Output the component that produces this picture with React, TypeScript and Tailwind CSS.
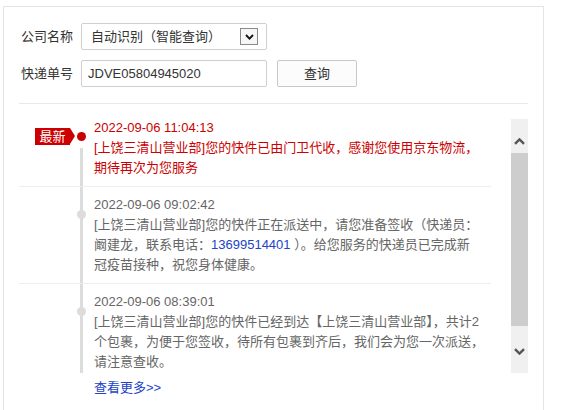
const ChevronDown = ({ className }: { className?: string }) => (
  <svg className={className} width="11" height="7" viewBox="0 0 11 7">
    <path d="M1 1.2 L5.5 5.6 L10 1.2" fill="none" stroke="#555" strokeWidth="2.4" />
  </svg>
);

const ChevronUp = ({ className }: { className?: string }) => (
  <svg className={className} width="11" height="7" viewBox="0 0 11 7">
    <path d="M1 5.8 L5.5 1.4 L10 5.8" fill="none" stroke="#555" strokeWidth="2.4" />
  </svg>
);

const App = () => {
  return (
    <div className="w-[567px] h-[410px] bg-white overflow-hidden font-['Liberation_Sans','Noto_Sans_CJK_SC',sans-serif] text-[13px] leading-[20px] text-[#333]">
      <div className="ml-[3px] mt-[6px] w-[541px] h-[420px] border border-[#e4e4e4] px-[15px]">
        {/* query form */}
        <div className="pt-[16px] pb-[16px] border-b border-[#e8e8e8] flex flex-col gap-[10px]">
          <div className="flex items-center">
            <span className="w-[62px] pl-[2px]">公司名称</span>
            <div className="w-[186px] h-[27px] border border-[#cfcfcf] rounded-[2px] flex items-center justify-between pl-[9px] pr-[8px]">
              <span>自动识别（智能查询）</span>
              <span className="w-[18px] h-[17px] border border-[#8a8a8a] bg-[#f6f6f6] flex items-center justify-center">
                <svg width="9" height="6" viewBox="0 0 9 6">
                  <path d="M1 1 L4.5 4.6 L8 1" fill="none" stroke="#111" strokeWidth="1.8" />
                </svg>
              </span>
            </div>
          </div>
          <div className="flex items-center">
            <span className="w-[62px] pl-[2px]">快递单号</span>
            <div className="w-[186px] h-[27px] border border-[#cfcfcf] rounded-[2px] flex items-center pl-[6px]">
              JDVE05804945020
            </div>
            <button className="ml-[10px] w-[80px] h-[27px] border border-[#c8c8c8] rounded-[2px] bg-[#fcfcfc] text-[#333]">
              查询
            </button>
          </div>
        </div>

        {/* timeline */}
        <div className="flex">
          <div className="relative flex-1 pt-[14px] pr-[20px] text-[#666]">
            <div className="absolute left-[61px] top-[44px] w-[3px] h-[225px] bg-[#dcdcdc]" />

            <div className="relative pl-[75px] pb-[8px] border-b border-[#eee] text-[#cc0000]">
              <div className="absolute left-[16px] top-[10px] flex">
                <span className="w-[35px] h-[17px] bg-[#cc0000] text-white text-[13px] leading-[17px] text-center">最新</span>
                <span className="w-0 h-0 border-y-[8.5px] border-y-transparent border-l-[5px] border-l-[#cc0000]" />
              </div>
              <div className="absolute left-[58px] top-[14px] w-[9px] h-[9px] rounded-full bg-[#cc0000]" />
              <div>2022-09-06 11:04:13</div>
              <div className="whitespace-nowrap">
                [上饶三清山营业部]您的快件已由门卫代收，感谢您使用京东物流，
                <br />
                期待再次为您服务
              </div>
            </div>

            <div className="relative pl-[75px] pt-[8px] pb-[8px] border-b border-[#eee]">
              <div className="absolute left-[58px] top-[23px] w-[9px] h-[9px] rounded-full bg-[#dcdcdc]" />
              <div>2022-09-06 09:02:42</div>
              <div className="whitespace-nowrap">
                [上饶三清山营业部]您的快件正在派送中，请您准备签收（快递员：
                <br />
                阚建龙，联系电话：<span className="text-[#2343c7]">13699514401</span> ）。给您服务的快递员已完成新
                <br />
                冠疫苗接种，祝您身体健康。
              </div>
            </div>

            <div className="relative pl-[75px] pt-[8px]">
              <div className="absolute left-[58px] top-[23px] w-[9px] h-[9px] rounded-full bg-[#dcdcdc]" />
              <div>2022-09-06 08:39:01</div>
              <div className="whitespace-nowrap">
                [上饶三清山营业部]您的快件已经到达【上饶三清山营业部】，共计2
                <br />
                个包裹，为便于您签收，待所有包裹到齐后，我们会为您一次派送，
                <br />
                请注意查收。
              </div>
            </div>

            <div className="pl-[75px] mt-[6px]">
              <a className="text-[#2343c7]">查看更多&gt;&gt;</a>
            </div>
          </div>

          {/* scrollbar */}
          <div className="mt-[15px] w-[17px] h-[254px] bg-[#f0f0f0] flex flex-col">
            <div className="h-[34px] flex justify-center pt-[19px]">
              <ChevronUp />
            </div>
            <div className="h-[173px] bg-[#cdcdcd]" />
            <div className="flex-1 flex justify-center pt-[22px]">
              <ChevronDown />
            </div>
          </div>
        </div>
      </div>
    </div>
  );
};

export default App;
